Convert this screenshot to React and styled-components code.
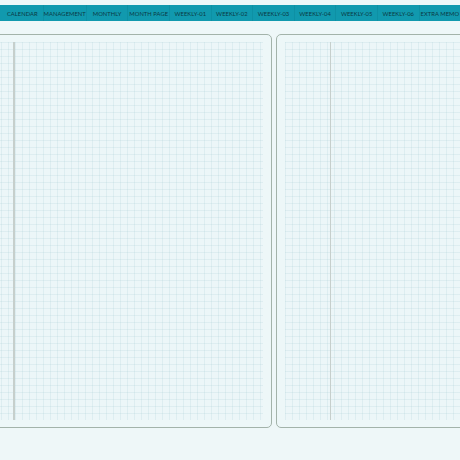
import React from "react";
import styled, { createGlobalStyle } from "styled-components";

const Global = createGlobalStyle`
  html, body { margin: 0; padding: 0; background: #eef7f8; overflow: hidden; }
  body { width: 460px; height: 460px; font-family: "Lato", "Liberation Sans", sans-serif; }
`;

const Screen = styled.div`
  width: 460px;
  height: 460px;
  display: flex;
  flex-direction: column;
  padding-top: 5px;
  box-sizing: border-box;
  overflow: hidden;
`;

const TabBar = styled.nav`
  display: flex;
  height: 16px;
  background: #1199ae;
  padding-left: 2px;
  flex-shrink: 0;
`;

const Tab = styled.div`
  flex: 0 0 41.6px;
  display: flex;
  align-items: center;
  justify-content: center;
  font-size: 5.8px;
  letter-spacing: 0.05px;
  color: #0b3a44;
  white-space: nowrap;
  border-right: 1px solid rgba(0, 80, 95, 0.12);
  box-sizing: border-box;
`;

const Spread = styled.div`
  display: flex;
  gap: 3.5px;
  margin-top: 13px;
  margin-left: -43px;
  height: 394px;
`;

const Page = styled.section`
  flex: 0 0 ${(p) => p.$w}px;
  border: 1.5px solid #a3b3aa;
  border-radius: 5px;
  background: #edf7f8;
  box-sizing: border-box;
  padding: 7px 8px;
  display: flex;
`;

const Grid = styled.div`
  flex: 1;
  background-color: #ecf6f8;
  background-image:
    linear-gradient(to right, rgba(170, 205, 212, 0.22) 1px, transparent 1px),
    linear-gradient(to bottom, rgba(170, 205, 212, 0.22) 1px, transparent 1px);
  background-size: 7px 7px;
  display: flex;
  padding-left: ${(p) => p.$margin}px;
`;

const MarginLine = styled.div`
  width: 1.5px;
  background: #c6cfcc;
  align-self: stretch;
`;

const tabs = [
  "CALENDAR",
  "MANAGEMENT",
  "MONTHLY",
  "MONTH PAGE",
  "WEEKLY-01",
  "WEEKLY-02",
  "WEEKLY-03",
  "WEEKLY-04",
  "WEEKLY-05",
  "WEEKLY-06",
  "EXTRA MEMO",
];

export default function App() {
  return (
    <>
      <Global />
      <Screen>
        <TabBar>
          {tabs.map((t) => (
            <Tab key={t}>{t}</Tab>
          ))}
        </TabBar>
        <Spread>
          <Page $w={315}>
            <Grid $margin={47}>
              <MarginLine />
            </Grid>
          </Page>
          <Page $w={240}>
            <Grid $margin={45}>
              <MarginLine />
            </Grid>
          </Page>
        </Spread>
      </Screen>
    </>
  );
}
